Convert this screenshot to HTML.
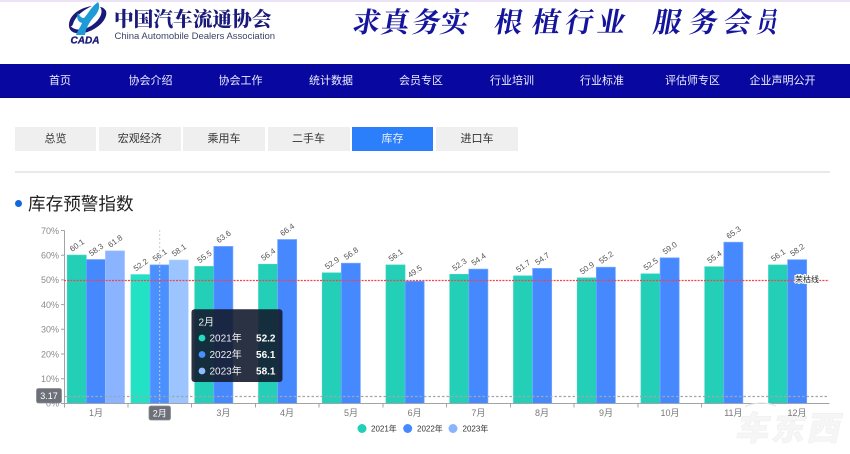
<!DOCTYPE html>
<html lang="zh">
<head>
<meta charset="utf-8">
<title>库存预警指数</title>
<style>
html,body{margin:0;padding:0;background:#fff;}
body{width:850px;height:454px;position:relative;overflow:hidden;font-family:"Liberation Sans","Noto Sans CJK SC",sans-serif;}
.wrap{position:absolute;left:0;top:0;width:850px;height:454px;overflow:hidden;background:#fff;filter:blur(.3px);}
.abs{position:absolute;}
.strip{left:0;top:0;width:850px;height:2px;background:#ece4f6;}
.nav{left:0;top:64px;width:850px;height:33px;background:#0808a0;border-bottom:1px solid #05057e;box-sizing:content-box;}
.nav span{position:absolute;top:0;line-height:34px;font-size:11px;color:#eef;transform:translateX(-50%);white-space:nowrap;}
.tab{position:absolute;top:127px;height:24px;line-height:24px;background:#efefef;color:#333;font-size:11px;text-align:center;}
.tab.on{background:#2c7ffb;color:#e8f0ff;}
.rule{left:15px;top:171px;width:815px;height:2px;background:#e9e9e9;}
.dot{left:15px;top:199.5px;width:7px;height:7px;border-radius:50%;background:#1466dd;}
.title{left:28px;top:192px;font-size:17.6px;line-height:25px;color:#222;white-space:nowrap;}
.cn{left:114px;top:7.5px;font-family:"Liberation Serif","Noto Serif CJK SC",serif;font-weight:900;font-size:19.7px;line-height:24px;color:#1a1a78;white-space:nowrap;}
.en{left:114.5px;top:30.5px;font-size:9.5px;line-height:12px;color:#3a4468;white-space:nowrap;}
.cal{position:absolute;font-family:"Noto Serif CJK SC",serif;font-weight:700;color:#14149c;font-size:28px;line-height:30px;top:6px;transform:skewX(-10deg);}
svg{position:absolute;left:0;top:0;}
</style>
</head>
<body>
<div class="wrap">
<div class="abs strip"></div>

<svg width="850" height="64" viewBox="0 0 850 64">
  <path d="M69 24C68 33 78 36 90 31C100 27 108 18 106 11C104 8 102 7 100 7C104 12 100 20 91 26C82 31 73 31 69 24Z" fill="#1a1a78"/>
  <path d="M69 24C70 15 79 8 92 6C84 10 76 15 73 24C72 27 70 27 69 24Z" fill="#1a1a78"/>
  <path d="M98 2C101 7 98 13 93 18C89 23 86 28 85 35L76 35C78 30 81 26 82 23C78 22 76 18 78 13C80 16 81 18 84 18C88 14 91 7 98 2Z" fill="#1e9ad6"/>
  <text x="70.5" y="43.5" font-family="Liberation Sans" font-weight="700" font-style="italic" font-size="10" fill="#1a1a78" stroke="#1a1a78" stroke-width=".3" textLength="29" lengthAdjust="spacingAndGlyphs">CADA</text>
</svg>

<div class="abs cn">中国汽车流通协会</div>
<div class="abs en">China Automobile Dealers Association</div>

<span class="cal" style="left:353px">求</span>
<span class="cal" style="left:382px">真</span>
<span class="cal" style="left:413px">务</span>
<span class="cal" style="left:441px">实</span>
<span class="cal" style="left:495px">根</span>
<span class="cal" style="left:533px">植</span>
<span class="cal" style="left:566px">行</span>
<span class="cal" style="left:598px">业</span>
<span class="cal" style="left:654px">服</span>
<span class="cal" style="left:690px">务</span>
<span class="cal" style="left:724px">会</span>
<span class="cal" style="left:754px;transform:skewX(-10deg) scaleX(.75)">员</span>

<div class="abs nav">
  <span style="left:60px">首页</span>
  <span style="left:150.5px">协会介绍</span>
  <span style="left:240.5px">协会工作</span>
  <span style="left:331px">统计数据</span>
  <span style="left:421px">会员专区</span>
  <span style="left:512px">行业培训</span>
  <span style="left:602px">行业标准</span>
  <span style="left:692.5px">评估师专区</span>
  <span style="left:782.5px">企业声明公开</span>
</div>

<div class="tab" style="left:15px;width:81px">总览</div>
<div class="tab" style="left:99px;width:81.5px">宏观经济</div>
<div class="tab" style="left:183px;width:82px">乘用车</div>
<div class="tab" style="left:267.5px;width:82px">二手车</div>
<div class="tab on" style="left:352px;width:81px">库存</div>
<div class="tab" style="left:436px;width:82px">进口车</div>

<div class="abs rule"></div>
<div class="abs dot"></div>
<div class="abs title">库存预警指数</div>

<svg width="850" height="454" viewBox="0 0 850 454" font-family="Liberation Sans, Noto Sans CJK SC, sans-serif">
  <!-- watermark (beneath labels) -->
  <text transform="translate(735,440) skewX(-12)" font-size="33" font-weight="900" fill="#f6f6f6" stroke="#eeeeee" stroke-width=".6" textLength="104" font-family="Noto Sans CJK SC, sans-serif">车东西</text>

  <!-- bars: 2021 -->
  <g fill="#24cfb8" stroke="#3fd6c2" stroke-width=".6">
    <rect x="67.2" y="255.05" width="19.1" height="148.45"/>
    <rect x="130.95" y="274.6" width="19.1" height="128.9" fill="#22e2c6"/>
    <rect x="194.7" y="266.4" width="19.1" height="137.1"/>
    <rect x="258.45" y="264.2" width="19.1" height="139.3"/>
    <rect x="322.2" y="272.8" width="19.1" height="130.7"/>
    <rect x="385.95" y="264.9" width="19.1" height="138.6"/>
    <rect x="449.7" y="274.3" width="19.1" height="129.2"/>
    <rect x="513.45" y="275.8" width="19.1" height="127.7"/>
    <rect x="577.2" y="277.8" width="19.1" height="125.7"/>
    <rect x="640.95" y="273.8" width="19.1" height="129.7"/>
    <rect x="704.7" y="266.7" width="19.1" height="136.8"/>
    <rect x="768.45" y="264.9" width="19.1" height="138.6"/>
  </g>
  <!-- bars: 2022 -->
  <g fill="#4689ff" stroke="#79a8ff" stroke-width=".7">
    <rect x="86.3" y="259.5" width="19.1" height="144"/>
    <rect x="150.07" y="264.9" width="19.1" height="138.6" fill="#4a90ff"/>
    <rect x="213.8" y="246.4" width="19.1" height="157.1"/>
    <rect x="277.6" y="239.5" width="19.1" height="164"/>
    <rect x="341.3" y="263.2" width="19.1" height="140.3"/>
    <rect x="405.1" y="281.2" width="19.1" height="122.3"/>
    <rect x="468.8" y="269.1" width="19.1" height="134.4"/>
    <rect x="532.6" y="268.4" width="19.1" height="135.1"/>
    <rect x="596.3" y="267.2" width="19.1" height="136.3"/>
    <rect x="660.1" y="257.8" width="19.1" height="145.7"/>
    <rect x="723.8" y="242.2" width="19.1" height="161.3"/>
    <rect x="787.6" y="259.7" width="19.1" height="143.8"/>
  </g>
  <!-- bars: 2023 -->
  <rect x="105.45" y="250.85" width="19.1" height="152.65" fill="#8ab4ff" stroke="#a6c6ff" stroke-width=".6"/>
  <rect x="169.2" y="260" width="19.1" height="143.5" fill="#9cc5ff" stroke="#b4d4ff" stroke-width=".6"/>

  <!-- value labels -->
  <g font-size="8" fill="#555" text-anchor="middle">
    <text transform="translate(76.8,245.1) rotate(-35)" y="3">60.1</text>
    <text transform="translate(95.9,249.5) rotate(-35)" y="3">58.3</text>
    <text transform="translate(115,240.9) rotate(-35)" y="3">61.8</text>
    <text transform="translate(140.5,264.6) rotate(-35)" y="3">52.2</text>
    <text transform="translate(159.6,254.9) rotate(-35)" y="3">56.1</text>
    <text transform="translate(178.8,250) rotate(-35)" y="3">58.1</text>
    <text transform="translate(204.3,256.4) rotate(-35)" y="3">55.5</text>
    <text transform="translate(223.4,236.4) rotate(-35)" y="3">63.6</text>
    <text transform="translate(268,254.2) rotate(-35)" y="3">56.4</text>
    <text transform="translate(287.1,229.5) rotate(-35)" y="3">66.4</text>
    <text transform="translate(331.8,262.8) rotate(-35)" y="3">52.9</text>
    <text transform="translate(350.9,253.2) rotate(-35)" y="3">56.8</text>
    <text transform="translate(395.5,254.9) rotate(-35)" y="3">56.1</text>
    <text transform="translate(414.6,271.2) rotate(-35)" y="3">49.5</text>
    <text transform="translate(459.3,264.3) rotate(-35)" y="3">52.3</text>
    <text transform="translate(478.4,259.1) rotate(-35)" y="3">54.4</text>
    <text transform="translate(523,265.8) rotate(-35)" y="3">51.7</text>
    <text transform="translate(542.1,258.4) rotate(-35)" y="3">54.7</text>
    <text transform="translate(586.8,267.8) rotate(-35)" y="3">50.9</text>
    <text transform="translate(605.9,257.2) rotate(-35)" y="3">55.2</text>
    <text transform="translate(650.5,263.8) rotate(-35)" y="3">52.5</text>
    <text transform="translate(669.6,247.8) rotate(-35)" y="3">59.0</text>
    <text transform="translate(714.3,256.7) rotate(-35)" y="3">55.4</text>
    <text transform="translate(733.4,232.2) rotate(-35)" y="3">65.3</text>
    <text transform="translate(778,254.9) rotate(-35)" y="3">56.1</text>
    <text transform="translate(797.1,249.7) rotate(-35)" y="3">58.2</text>
  </g>

  <!-- axes -->
  <path d="M64.5 230.5V404M61 230.5h3.5M61 255.2h3.5M61 279.9h3.5M61 304.6h3.5M61 329.3h3.5M61 354h3.5M61 378.7h3.5" stroke="#a2a2a8" stroke-width="1" fill="none"/>
  <path d="M61 403.5H829.5M64.5 403.5v4M128 403.5v4M191.5 403.5v4M255.5 403.5v4M319 403.5v4M383 403.5v4M446.5 403.5v4M510.5 403.5v4M574 403.5v4M638 403.5v4M701.5 403.5v4" stroke="#a2a2a8" stroke-width="1" fill="none"/>
  <path d="M745 407C752 402 768 402 776 406" fill="none" stroke="#e4e4e4" stroke-width="1.2"/>

  <g font-size="9" fill="#8a8a90" text-anchor="end">
    <text x="59" y="234">70%</text>
    <text x="59" y="258.5">60%</text>
    <text x="59" y="283.2">50%</text>
    <text x="59" y="308">40%</text>
    <text x="59" y="332.7">30%</text>
    <text x="59" y="357.4">20%</text>
    <text x="59" y="382">10%</text>
    <text x="59" y="406.5">0%</text>
  </g>
  <g font-size="9" fill="#777" text-anchor="middle">
    <text x="96" y="416">1月</text>
    <text x="223.4" y="416">3月</text>
    <text x="287" y="416">4月</text>
    <text x="351" y="416">5月</text>
    <text x="414.6" y="416">6月</text>
    <text x="478.4" y="416">7月</text>
    <text x="542" y="416">8月</text>
    <text x="606" y="416">9月</text>
    <text x="670" y="416">10月</text>
    <text x="733.4" y="416">11月</text>
    <text x="797" y="416">12月</text>
  </g>

  <!-- reference lines -->
  <line x1="64" y1="280.5" x2="829" y2="280.5" stroke="#f8404c" stroke-width="1.2" stroke-dasharray="2 1.2"/>
  <line x1="64" y1="396.5" x2="829" y2="396.5" stroke="#a4a4a4" stroke-width="1.2" stroke-dasharray="2.5 2"/>
  <line x1="159.7" y1="230" x2="159.7" y2="403" stroke="#c8ccd6" stroke-width="1" stroke-dasharray="2 2"/>
  <text x="795" y="282" font-size="8" fill="#222" stroke="#fff" stroke-width="2" paint-order="stroke">荣枯线</text>

  <!-- axis pointer tags -->
  <rect x="36.5" y="388.5" width="25" height="14.5" rx="2" fill="#6e7079" stroke="#8a8c94" stroke-width=".8"/>
  <text x="49" y="399" font-size="9" fill="#fff" text-anchor="middle">3.17</text>
  <rect x="149" y="406" width="21.5" height="14" rx="2" fill="#6e7079" stroke="#8a8c94" stroke-width=".8"/>
  <text x="159.7" y="416.5" font-size="9" fill="#fff" text-anchor="middle">2月</text>

  <!-- tooltip -->
  <rect x="191.5" y="309.3" width="91" height="72.7" rx="3" fill="#141c30" fill-opacity=".9"/>
  <text x="198.5" y="325.5" font-size="10" fill="#eee">2月</text>
  <circle cx="202" cy="338" r="3.4" fill="#24dcc2"/>
  <circle cx="202" cy="354.5" r="3.4" fill="#4a8fff"/>
  <circle cx="202" cy="371" r="3.4" fill="#8fbaff"/>
  <g font-size="10" fill="#eee">
    <text x="209.5" y="341.5">2021年</text>
    <text x="209.5" y="358">2022年</text>
    <text x="209.5" y="374.5">2023年</text>
  </g>
  <g font-size="10" fill="#fff" font-weight="700" text-anchor="end">
    <text x="275.5" y="341.5">52.2</text>
    <text x="275.5" y="358">56.1</text>
    <text x="275.5" y="374.5">58.1</text>
  </g>

  <!-- legend -->
  <circle cx="362" cy="428.5" r="4.5" fill="#24cfb8"/>
  <circle cx="407.7" cy="428.5" r="4.5" fill="#4689ff"/>
  <circle cx="453" cy="428.5" r="4.5" fill="#8ab4ff"/>
  <g font-size="8" fill="#333">
    <text x="371" y="431.5">2021年</text>
    <text x="417" y="431.5">2022年</text>
    <text x="462.5" y="431.5">2023年</text>
  </g>
</svg>
</div>
</body>
</html>
